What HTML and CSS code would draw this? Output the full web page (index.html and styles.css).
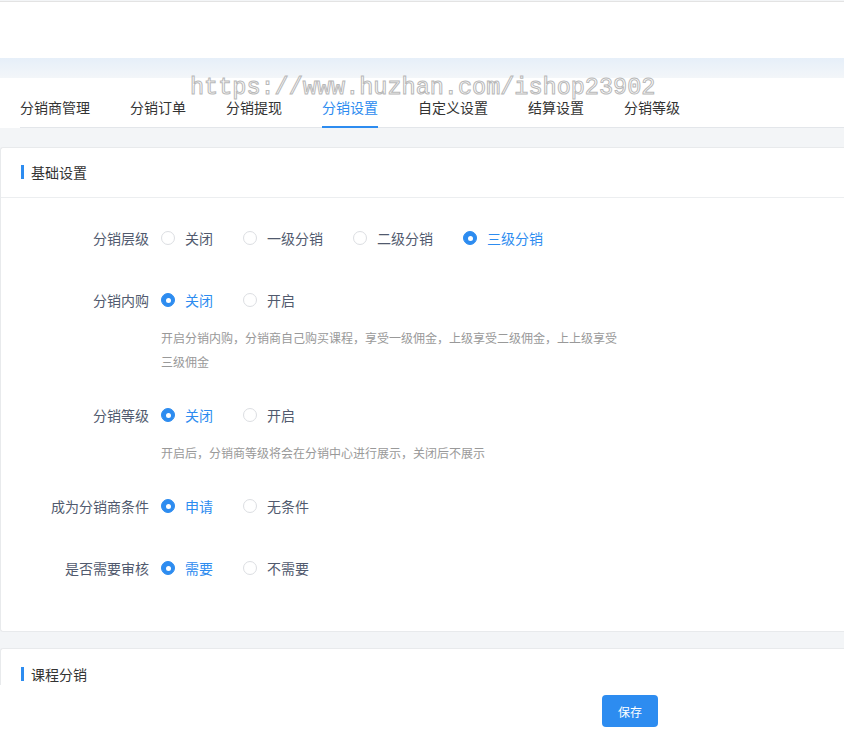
FILE: index.html
```html
<!DOCTYPE html>
<html lang="zh-CN">
<head>
<meta charset="utf-8">
<title>分销设置</title>
<link rel="stylesheet" href="styles.css">
</head>
<body>
<div class="topbar"></div>
<div class="band"></div>
<div class="tabs-wrap">
  <div class="tabs">
    <div class="tab">分销商管理</div>
    <div class="tab">分销订单</div>
    <div class="tab">分销提现</div>
    <div class="tab active">分销设置</div>
    <div class="tab">自定义设置</div>
    <div class="tab">结算设置</div>
    <div class="tab">分销等级</div>
  </div>
  <div class="watermark">https://www.huzhan.com/ishop23902</div>
</div>
<div class="content">
  <div class="card">
    <div class="card-head"><span class="bar"></span>基础设置</div>
    <div class="card-body">
      <div class="item">
        <div class="label">分销层级</div>
        <div class="ctrl">
          <div class="opts">
            <span class="opt"><span class="radio"></span>关闭</span>
            <span class="opt"><span class="radio"></span>一级分销</span>
            <span class="opt"><span class="radio"></span>二级分销</span>
            <span class="opt on"><span class="radio"></span>三级分销</span>
          </div>
        </div>
      </div>
      <div class="item">
        <div class="label">分销内购</div>
        <div class="ctrl">
          <div class="opts">
            <span class="opt on"><span class="radio"></span>关闭</span>
            <span class="opt"><span class="radio"></span>开启</span>
          </div>
          <div class="hint">开启分销内购，分销商自己购买课程，享受一级佣金，上级享受二级佣金，上上级享受<br>三级佣金</div>
        </div>
      </div>
      <div class="item">
        <div class="label">分销等级</div>
        <div class="ctrl">
          <div class="opts">
            <span class="opt on"><span class="radio"></span>关闭</span>
            <span class="opt"><span class="radio"></span>开启</span>
          </div>
          <div class="hint">开启后，分销商等级将会在分销中心进行展示，关闭后不展示</div>
        </div>
      </div>
      <div class="item">
        <div class="label">成为分销商条件</div>
        <div class="ctrl">
          <div class="opts">
            <span class="opt on"><span class="radio"></span>申请</span>
            <span class="opt"><span class="radio"></span>无条件</span>
          </div>
        </div>
      </div>
      <div class="item">
        <div class="label">是否需要审核</div>
        <div class="ctrl">
          <div class="opts">
            <span class="opt on"><span class="radio"></span>需要</span>
            <span class="opt"><span class="radio"></span>不需要</span>
          </div>
        </div>
      </div>
    </div>
  </div>
  <div class="card second">
    <div class="card-head"><span class="bar"></span>课程分销</div>
  </div>
</div>
<div class="footer">
  <button class="save">保存</button>
</div>
</body>
</html>
```
FILE: styles.css
```css
* { box-sizing: border-box; }
html, body { margin: 0; padding: 0; }
body {
  width: 844px;
  height: 732px;
  overflow: hidden;
  background: #f3f5f7;
  font-family: "Noto Sans CJK SC", "Noto Sans", sans-serif;
  font-size: 14px;
  color: #515a6e;
  position: relative;
}
.topbar {
  height: 57px;
  background: #fff;
  border-top: 1px solid #e3e3e3;
  margin-top: 1px;
}
.band {
  height: 20px;
  background: linear-gradient(#e6eff9, #f3f6f9);
}
.tabs-wrap {
  background: #fff;
  height: 50px;
  padding-left: 20px;
  position: relative;
}
.tabs {
  display: flex;
  gap: 40px;
  height: 50px;
  border-bottom: 1px solid #e3e6ea;
}
.tab {
  height: 50px;
  padding-top: 11px;
  line-height: 37px;
  color: #333;
  border-bottom: 2px solid transparent;
}
.tab.active {
  color: #2d8cf0;
  border-bottom-color: #2d8cf0;
}
.watermark {
  position: absolute;
  left: 190px;
  top: -4px;
  font-family: "Liberation Mono", "DejaVu Sans Mono", monospace;
  font-size: 23.5px;
  color: rgba(255,255,255,0.85);
  -webkit-text-stroke: 1px #b8b8b8;
  white-space: nowrap;
  pointer-events: none;
}
.content {
  padding-top: 19px;
}
.card {
  background: #fff;
  border: 1px solid #e8eaec;
  border-right: none;
  border-radius: 3px 0 0 3px;
}
.card.second {
  margin-top: 16px;
}
.card-head {
  height: 50px;
  display: flex;
  align-items: center;
  padding-left: 20px;
  padding-bottom: 1px;
  color: #333;
  border-bottom: 1px solid #eceef0;
}
.card.second .card-head { border-bottom: none; }
.bar {
  width: 3px;
  height: 14px;
  background: #2d8cf0;
  margin-right: 7px;
}
.card-body {
  padding: 24px 0 17px;
}
.item {
  display: flex;
  margin-bottom: 30px;
}
.label {
  width: 160px;
  padding-right: 12px;
  text-align: right;
  line-height: 32px;
  color: #515a6e;
}
.opts {
  display: flex;
  height: 32px;
  align-items: center;
}
.opt {
  display: inline-flex;
  align-items: center;
  margin-right: 30px;
  color: #515a6e;
}
.opt.on { color: #2d8cf0; }
.radio {
  width: 14px;
  height: 14px;
  border: 1px solid #dcdee2;
  border-radius: 50%;
  margin-right: 10px;
  background: #fff;
  position: relative;
}
.opt.on .radio {
  border-color: #2d8cf0;
  background: #2d8cf0;
}
.opt.on .radio::after {
  content: "";
  position: absolute;
  left: 3.5px;
  top: 3.5px;
  width: 5px;
  height: 5px;
  border-radius: 50%;
  background: #fff;
}
.hint {
  font-size: 12px;
  color: #999;
  line-height: 24px;
  margin-top: 10px;
  margin-bottom: -5px;
}
.footer {
  position: absolute;
  left: 0;
  right: 0;
  bottom: 0;
  height: 47px;
  background: #fff;
  padding: 10px 0 0 602px;
}
.save {
  width: 56px;
  height: 32px;
  border: none;
  border-radius: 4px;
  background: #2d8cf0;
  color: #fff;
  font-family: "Noto Sans CJK SC", sans-serif;
  font-size: 12px;
  padding: 0;
}
```
